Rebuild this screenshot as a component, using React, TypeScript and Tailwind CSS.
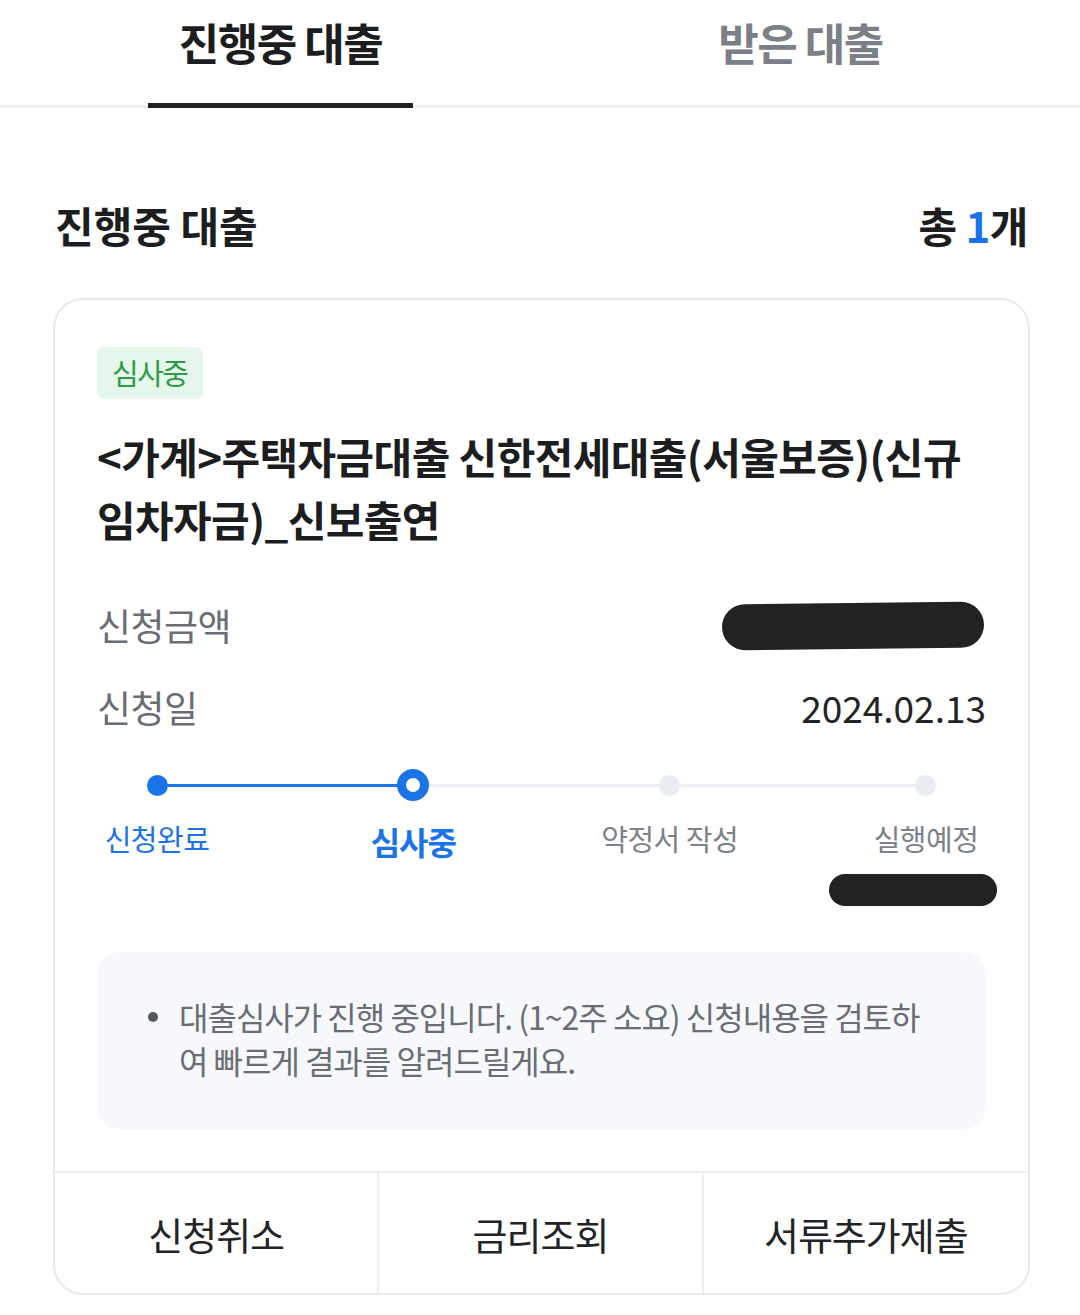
import React from "react";

const steps = [
  { label: "신청완료", state: "done" },
  { label: "심사중", state: "current" },
  { label: "약정서 작성", state: "todo" },
  { label: "실행예정", state: "todo" },
];

function Dot({ state }: { state: string }) {
  if (state === "done") return <div className="w-[21px] h-[21px] rounded-full bg-[#1b73e8]" />;
  if (state === "current")
    return <div className="w-[32px] h-[32px] rounded-full border-[9px] border-[#1b73e8] bg-white" />;
  return <div className="w-[21px] h-[21px] rounded-full bg-[#e9ecf3]" />;
}

export default function App() {
  return (
    <div
      className="w-[1080px] h-[1315px] bg-white overflow-hidden"
      style={{ fontFamily: '"Noto Sans CJK KR", "Noto Sans", sans-serif' }}
    >
      {/* tabs */}
      <div className="relative h-[108px] border-b-[3px] border-[#eef0f3] flex">
        <div className="ml-[148px] w-[265px] flex items-center justify-center relative">
          <span className="text-[44px] font-bold text-[#1c1d1f] tracking-[-1.5px] -mt-[22px]">진행중 대출</span>
          <div className="absolute left-0 right-0 -bottom-[3px] h-[5px] bg-[#202226]" />
        </div>
        <div className="ml-[255px] w-[265px] flex items-center justify-center">
          <span className="text-[44px] font-bold text-[#7b8088] tracking-[-1.5px] -mt-[22px]">받은 대출</span>
        </div>
      </div>

      {/* header */}
      <div className="flex items-center justify-between pl-[55px] pr-[52px] pt-[92px] pb-[48px]">
        <span className="text-[42px] font-bold text-[#1c1d1f] leading-[50px]">진행중 대출</span>
        <span className="text-[42px] font-bold text-[#1c1d1f] leading-[50px] tracking-[-0.5px]">
          총 <span className="text-[#1b73e8]">1</span>개
        </span>
      </div>

      {/* card */}
      <div className="ml-[53px] w-[977px] border-2 border-[#e8eaee] rounded-[30px] overflow-hidden">
        <div className="px-[42px] pt-[47px] pb-[42px]">
          <div className="inline-flex items-center h-[52px] px-[15px] rounded-[7px] bg-[#e5f6ea] text-[#2f9a48] text-[29px] tracking-[-1.5px]">
            심사중
          </div>
          <div className="mt-[25px] text-[42px] font-bold text-[#1c1d1f] leading-[63px] tracking-[-0.6px]">
            &lt;가계&gt;주택자금대출 신한전세대출(서울보증)(신규
            <br />
            임차자금)_신보출연
          </div>

          <div className="mt-[48px] flex items-center justify-between h-[56px]">
            <span className="text-[37px] text-[#6a6e74] tracking-[-0.5px]">신청금액</span>
            <div className="w-[262px] h-[46px] rounded-full bg-[#222] -rotate-[0.6deg] mr-[2px]" />
          </div>
          <div className="mt-[26px] flex items-center justify-between h-[56px]">
            <span className="text-[37px] text-[#6a6e74] tracking-[-0.5px]">신청일</span>
            <span className="text-[37px] text-[#222426]">2024.02.13</span>
          </div>

          {/* stepper */}
          <div className="mt-[32px] relative">
            <div className="relative h-[34px] mx-[60px]">
              <div className="absolute top-[16px] left-0 right-0 h-[3px] bg-[#eceef3]" />
              <div className="absolute top-[16px] left-0 w-1/3 h-[3px] bg-[#1b73e8]" />
              <div className="absolute inset-0 flex justify-between items-center">
                {steps.map((s, i) => (
                  <div key={i} className="w-0 flex justify-center">
                    <div className="shrink-0">
                      <Dot state={s.state} />
                    </div>
                  </div>
                ))}
              </div>
            </div>
            <div className="mt-[15px] flex justify-between mx-[60px]">
              {steps.map((s, i) => (
                <div key={i} className="w-0 flex justify-center">
                  <span
                    className={
                      "shrink-0 whitespace-nowrap " +
                      (s.state === "done"
                        ? "text-[29px] text-[#1b73e8] tracking-[-0.5px]"
                        : s.state === "current"
                        ? "text-[32px] font-bold text-[#1b73e8] tracking-[-1px]"
                        : "text-[29px] text-[#7d8289] tracking-[-0.5px]")
                    }
                  >
                    {s.label}
                  </span>
                </div>
              ))}
            </div>
            <div className="flex justify-end mt-[9px] mr-[-11px]">
              <div className="w-[168px] h-[32px] rounded-full bg-[#222]" />
            </div>
          </div>

          {/* notice */}
          <div className="mt-[46px] bg-[#f6f8fb] rounded-[22px] pl-[51px] pr-[48px] pt-[42px] pb-[47px]">
            <div className="flex gap-[21px] text-[32px] text-[#6a6e74] leading-[44px] tracking-[-1px]">
              <span className="w-[10px] h-[10px] rounded-full bg-[#54585e] mt-[18px] shrink-0" />
              <p>대출심사가 진행 중입니다. (1~2주 소요) 신청내용을 검토하여 빠르게 결과를 알려드릴게요.</p>
            </div>
          </div>
        </div>

        {/* actions */}
        <div className="grid grid-cols-3 border-t-2 border-[#eceef2] h-[122px]">
          {["신청취소", "금리조회", "서류추가제출"].map((t, i) => (
            <div
              key={t}
              className={
                "flex items-center justify-center text-[38px] text-[#222426] tracking-[-1px] " +
                (i < 2 ? "border-r-2 border-[#eceef2]" : "")
              }
            >
              {t}
            </div>
          ))}
        </div>
      </div>
    </div>
  );
}
